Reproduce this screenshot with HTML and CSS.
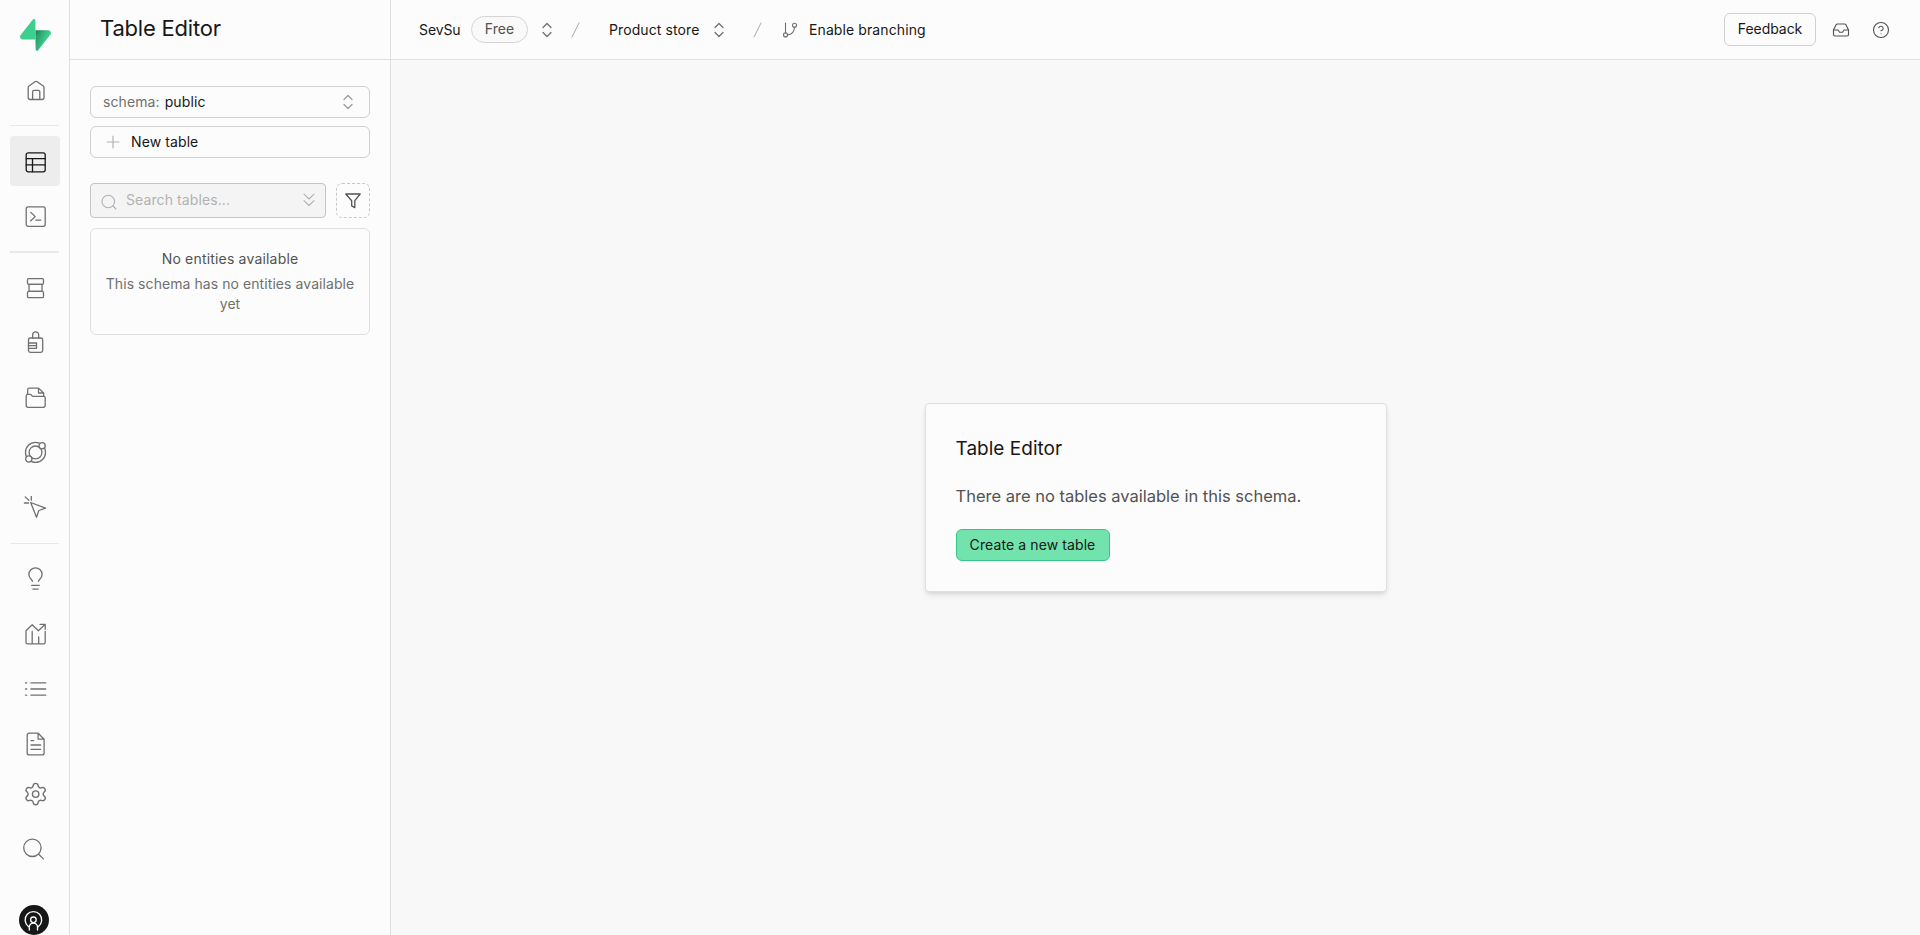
FILE: index.html
```html
<!DOCTYPE html>
<html lang="en">
<head>
<meta charset="utf-8">
<title>Table Editor</title>
<link rel="stylesheet" href="styles.css">
</head>
<body>
<div class="app">
  <nav class="rail">
    <a class="logo"><svg width="31" height="32" viewBox="0 0 109 113" fill="none">
      <defs>
        <linearGradient id="g1" x1="53.97" y1="54.97" x2="94.16" y2="71.83" gradientUnits="userSpaceOnUse"><stop stop-color="#249361"/><stop offset="1" stop-color="#3ECF8E"/></linearGradient>
        <linearGradient id="g2" x1="36.16" y1="30.58" x2="54.48" y2="65.08" gradientUnits="userSpaceOnUse"><stop/><stop offset="1" stop-opacity="0"/></linearGradient>
      </defs>
      <path d="M63.7076 110.284C60.8481 113.885 55.0502 111.912 54.9813 107.314L53.9738 40.0627L99.1935 40.0627C107.384 40.0627 111.952 49.5228 106.859 55.9374L63.7076 110.284Z" fill="url(#g1)"/>
      <path d="M63.7076 110.284C60.8481 113.885 55.0502 111.912 54.9813 107.314L53.9738 40.0627L99.1935 40.0627C107.384 40.0627 111.952 49.5228 106.859 55.9374L63.7076 110.284Z" fill="url(#g2)" fill-opacity=".2"/>
      <path d="M45.317 2.07103C48.1765 -1.53037 53.9745 0.442937 54.0434 5.041L54.4849 72.2922H9.83113C1.64038 72.2922 -2.92775 62.8321 2.1655 56.4175L45.317 2.07103Z" fill="#3ECF8E"/>
    </svg></a>
    <div class="group">
      <a class="item"><svg class="icon"><path d="M5.2 9.600a2 2 0 0 1 .8-1.600l6-4.200a2 2 0 0 1 2.200 0l6 4.200a2 2 0 0 1 .8 1.600v9.900a2 2 0 0 1-2 2H7.200a2 2 0 0 1-2-2zM9.600 21.500v-7.700a1.500 1.500 0 0 1 1.500-1.500h4.200a1.500 1.500 0 0 1 1.500 1.500v7.700"/></svg></a>
    </div>
    <hr class="rule">
    <div class="group">
      <a class="item active"><svg class="icon"><rect x="3.200" y="3.800" width="19" height="19" rx="2"/><path d="M3.200 9.700h19M3.200 15.900h19M9.500 9.700v13"/></svg></a>
      <a class="item"><svg class="icon"><rect x="3.200" y="2.900" width="19" height="19.400" rx="2"/><path d="m7.800 8.400 4.400 4.200-4.400 4.200M12.800 16.100h5"/></svg></a>
    </div>
    <hr class="rule thick">
    <div class="group">
      <a class="item"><svg class="icon"><rect x="4.500" y="2.700" width="16" height="5.600" rx="1.200"/><rect x="6" y="8.300" width="13" height="7.100"/><rect x="4.500" y="15.400" width="16" height="6.200" rx="1.200"/></svg></a>
      <a class="item"><svg class="icon"><rect x="5.500" y="7" width="14.200" height="14.300" rx="1.800"/><path d="M9.700 7V3.900a3 3 0 0 1 6 0V7M5.500 12h8v5.400h-8M5.500 14.700h8"/></svg></a>
      <a class="item"><svg class="icon"><path d="M3.200 10a1.600 1.600 0 0 1 1.600-1.600h2.300c1.500 0 1.500 2 3 2h10.500a1.600 1.600 0 0 1 1.600 1.600v7.300a2 2 0 0 1-2 2H5.200a2 2 0 0 1-2-2zM4.700 8.400V3.700a1.600 1.600 0 0 1 1.600-1.600h9.200l5.200 4.900v3.400M15.500 2.100V7h5.200"/></svg></a>
      <a class="item"><svg class="icon"><circle cx="12.500" cy="11.400" r="10"/><circle cx="12.500" cy="11.400" r="6.400"/><circle class="node" cx="19.100" cy="4.800" r="3.100"/><circle class="node" cx="5.800" cy="18" r="3.100"/></svg></a>
      <a class="item"><svg class="icon"><path d="m7.700 6.500 14.800 5.700-6.700 2.300-2.300 6.800zM8.300.3v4M2.200.9l3.600 3.400M1.400 7h4.200"/></svg></a>
    </div>
    <hr class="rule">
    <div class="group">
      <a class="item"><svg class="icon"><path d="M9.400 14.300c0-1.700-3.500-3-3.500-6.900a6.600 6.600 0 0 1 13.200 0c0 3.900-3.600 5.200-3.600 6.900M8.700 18.300h7.600M9.900 22.200h5.200"/></svg></a>
      <a class="item"><svg class="icon"><path d="M3 9.500v10.700a1.600 1.600 0 0 0 1.600 1.600h16a1.600 1.600 0 0 0 1.600-1.600V9.500M9.200 9.500v12.300M15.700 15v6.800M3 8.800l6.200-6 6.200 6 6.600-6.300M17 2.300h5.200v5"/></svg></a>
      <a class="item"><svg class="icon"><path d="M7.900 5.900h14.800M7.900 12h14.800M7.900 18.200h14.800M2.500 5.900h1.200M2.500 12h1.200M2.500 18.200h1.200"/></svg></a>
      <a class="item"><svg class="icon"><path d="M6.200 1.200h9l5.900 6v13.700a2 2 0 0 1-2 2H6.200a2 2 0 0 1-2-2V3.200a2 2 0 0 1 2-2zM15.100 1.200v6h6M8 8.600h2.700M8 13h9.600M8 17.300h9.600"/></svg></a>
    </div>
    <a class="item gear"><svg class="icon" viewBox="0.200 0.700 22.400 22.400"><path d="M9.671 4.136a2.340 2.340 0 0 1 4.659 0 2.340 2.340 0 0 0 3.319 1.915 2.340 2.340 0 0 1 2.330 4.033 2.340 2.340 0 0 0 0 3.831 2.340 2.340 0 0 1-2.330 4.033 2.340 2.340 0 0 0-3.319 1.915 2.340 2.340 0 0 1-4.659 0 2.340 2.340 0 0 0-3.320-1.915 2.340 2.340 0 0 1-2.330-4.033 2.340 2.340 0 0 0 0-3.831A2.340 2.340 0 0 1 6.350 6.051a2.340 2.340 0 0 0 3.319-1.915"/><circle cx="12" cy="12" r="3"/></svg></a>
    <a class="item find"><svg class="icon"><circle cx="9.400" cy="10.800" r="8.700"/><path d="m15.700 17.300 4.700 4.600"/></svg></a>
    <a class="avatar"><svg width="30" height="30" viewBox="0 0 30 30" fill="none" stroke="#fff" stroke-width="1.300"><circle cx="15" cy="15" r="15" fill="#171717" stroke="none"/><path d="M9.400 21.500a8.300 8.300 0 1 1 10 0M10.300 25v-3.500a4.200 4.200 0 0 1 8.200 0V25"/><circle cx="14.400" cy="14.800" r="2.800"/></svg></a>
  </nav>

  <aside class="panel">
    <header class="panel-head"><h1>Table Editor</h1></header>
    <div class="panel-body">
      <button class="field"><span class="muted">schema:</span><span class="value">public</span>
        <svg class="chev" width="12" height="16" viewBox="0 0 12 16"><path d="m2 5.500 4-4 4 4M2 10.500l4 4 4-4"/></svg></button>
      <button class="field new"><svg class="plus" width="14" height="14" viewBox="0 0 14 14"><path d="M7 1.200v11.600M1.200 7h11.600"/></svg><span>New table</span></button>
      <div class="search-row">
        <div class="search"><svg width="16" height="16" viewBox="0 0 16 16"><circle cx="7.300" cy="7.500" r="6.300"/><path d="m12 12 3 3"/></svg><span>Search tables...</span>
          <svg class="sort" width="12" height="14" viewBox="0 0 12 14"><path d="m1 1.200 5 4.800 5-4.800M1 7.700l5 4.800 5-4.800"/></svg></div>
        <button class="filter"><svg width="18" height="18" viewBox="0 0 18 18"><path d="M1.800 2h14.400l-5.400 6.700v6.900l-3.100-1.700V8.700z"/></svg></button>
      </div>
      <div class="empty"><p class="empty-title">No entities available</p><p class="empty-text">This schema has no entities available yet</p></div>
    </div>
  </aside>

  <div class="main">
    <header class="topbar">
      <span class="org">SevSu</span>
      <span class="pill">Free</span>
      <svg class="updown" width="12" height="16" viewBox="0 0 12 16"><path d="m2 5.500 4-4 4 4M2 10.500l4 4 4-4"/></svg>
      <svg class="slash" width="9" height="16" viewBox="0 0 9 16"><path d="M8 1 1 15"/></svg>
      <span class="project">Product store</span>
      <svg class="updown" width="12" height="16" viewBox="0 0 12 16"><path d="m2 5.500 4-4 4 4M2 10.500l4 4 4-4"/></svg>
      <svg class="slash second" width="9" height="16" viewBox="0 0 9 16"><path d="M8 1 1 15"/></svg>
      <svg class="branch" width="16" height="16" viewBox="0 0 16 16"><path d="M3.500 1v9.900M12.500 5.300c0 4-2.600 7.500-7 7.600"/><circle cx="3.500" cy="12.900" r="2"/><circle cx="12.500" cy="3.300" r="2"/></svg>
      <span class="branching">Enable branching</span>
      <div class="actions">
        <button class="feedback">Feedback</button>
        <svg class="action" width="18" height="18" viewBox="0 0 24 24"><path d="M22 12h-6l-2 3h-4l-2-3H2"/><path d="M5.450 5.110 2 12v6a2 2 0 0 0 2 2h16a2 2 0 0 0 2-2v-6l-3.450-6.890A2 2 0 0 0 16.760 4H7.240a2 2 0 0 0-1.790 1.110z"/></svg>
        <svg class="action" width="18" height="18" viewBox="0 0 24 24"><circle cx="12" cy="12" r="10"/><path d="M9.090 9a3 3 0 0 1 5.830 1c0 2-3 3-3 3M12 17h.01"/></svg>
      </div>
    </header>
    <main class="canvas">
      <section class="card">
        <h2>Table Editor</h2>
        <p>There are no tables available in this schema.</p>
        <button class="primary">Create a new table</button>
      </section>
    </main>
  </div>
</div>
</body>
</html>
```
FILE: styles.css
```css
* { box-sizing: border-box; margin: 0; padding: 0; }
body { font-family: Inter, "Liberation Sans", sans-serif; font-size: 14px; letter-spacing: .1px; color: #171717; background: #fcfcfc; overflow: hidden; }
button { font: inherit; color: inherit; background: none; border: 0; letter-spacing: inherit; }
svg { fill: none; flex: none; stroke-linecap: round; stroke-linejoin: round; }
span, h1, h2 { white-space: nowrap; }
.app { display: flex; height: 935px; }

.rail { width: 70px; flex: none; border-right: 1px solid #dfdfdf; padding: 19px 0 0 10px; display: flex; flex-direction: column; align-items: flex-start; }
.logo { height: 32px; margin: 0 0 14px 10px; }
.logo svg { display: block; }
.group { display: flex; flex-direction: column; gap: 5px; }
.item { width: 50px; height: 50px; display: flex; align-items: center; justify-content: center; border-radius: 4px; color: #707070; flex: none; }
.item.active { background: #ededed; color: #171717; }
.icon { width: 24px; height: 24px; stroke: currentColor; stroke-width: 1.3; }
.node { fill: #fcfcfc; }
.rule { border: 0; width: 49px; height: 1px; background: #e8e8e8; margin: 10px 0; flex: none; }
.rule.thick { height: 2px; }
.find { margin-top: 5px; }
.avatar { height: 30px; margin: 31px 0 0 9px; }

.panel { width: 321px; flex: none; border-right: 1px solid #dfdfdf; }
.panel-head { height: 60px; border-bottom: 1px solid #dfdfdf; padding: 14px 0 0 30px; }
h1 { font-size: 22px; line-height: 28px; font-weight: 400; letter-spacing: -.2px; }
.panel-body { padding: 26px 20px 0; }
.field { width: 280px; height: 32px; border: 1px solid #d0d0d0; border-radius: 6px; display: flex; align-items: center; padding: 0 15px 2px 12px; margin-bottom: 8px; }
.muted { color: #707070; margin-right: 5px; }
.chev { margin: 2px 0 0 auto; stroke: #999; stroke-width: 1.2; }
.plus { stroke: #b2b2b2; stroke-width: 1.2; margin: 2px 11px 0 3px; }
.search-row { display: flex; gap: 10px; margin-top: 25px; }
.search { width: 236px; height: 35px; background: #f4f4f4; border: 1px solid #c4c4c4; border-radius: 4px; display: flex; align-items: center; padding: 0 10px; color: #b2b2b2; }
.search svg { stroke: #b2b2b2; stroke-width: 1.1; margin-top: 2px; }
.search span { margin: -2px 0 0 9px; }
.search .sort { margin: -1px 0 0 auto; }
.filter { width: 34px; height: 35px; border: 1px dashed #c7c7c7; border-radius: 6px; display: flex; align-items: center; justify-content: center; }
.filter svg { stroke: #525252; stroke-width: 1.3; }
.empty { margin-top: 10px; height: 107px; border: 1px solid #dfdfdf; border-radius: 6px; padding: 20px 12px; text-align: center; line-height: 20px; }
.empty-title { color: #525252; letter-spacing: .18px; }
.empty-text { color: #707070; margin-top: 5px; letter-spacing: .07px; }

.main { flex: 1; display: flex; flex-direction: column; min-width: 0; }
.topbar { height: 60px; flex: none; border-bottom: 1px solid #dfdfdf; display: flex; align-items: center; padding: 0 30px 0 28px; }
.org { width: 52px; letter-spacing: -.1px; }
.pill { width: 57px; height: 27px; border: 1px solid #d4d4d4; border-radius: 14px; text-align: center; line-height: 24px; color: #525252; background: #f9f9f9; }
.updown { stroke: #707070; stroke-width: 1.3; margin-left: 13px; }
.slash { stroke: #a8a8a8; stroke-width: 1; margin-left: 18px; }
.project { width: 91px; margin-left: 29px; }
.project + .updown { margin-left: 13px; }
.slash.second { margin-left: 28px; }
.branch { stroke: #707070; stroke-width: 1.1; margin-left: 20px; }
.branching { margin-left: 11px; }
.actions { margin-left: auto; display: flex; align-items: center; gap: 22px; }
.feedback { width: 92px; height: 33px; border: 1px solid #d0d0d0; border-radius: 6px; margin-right: -6px; padding-bottom: 2px; letter-spacing: -.05px; }
.action { stroke: #525252; stroke-width: 1.5; }
.canvas { flex: 1; background: #f8f8f8; display: flex; align-items: center; justify-content: center; }
.card { width: 462px; height: 189px; background: #fcfcfc; border: 1px solid #dfdfdf; border-radius: 4px; box-shadow: 0 4px 6px -1px rgba(0,0,0,.1), 0 2px 4px -2px rgba(0,0,0,.1); padding: 31px 30px 30px; }
h2 { font-size: 19px; line-height: 28px; font-weight: 400; letter-spacing: .02px; }
.card p { font-size: 16.5px; line-height: 24px; letter-spacing: 0; color: #525252; margin-top: 21px; white-space: nowrap; }
.primary { display: block; margin-top: 21px; width: 154px; height: 32px; background: #72e3ad; border: 1px solid #35c689; border-radius: 6px; padding-bottom: 2px; }
```
